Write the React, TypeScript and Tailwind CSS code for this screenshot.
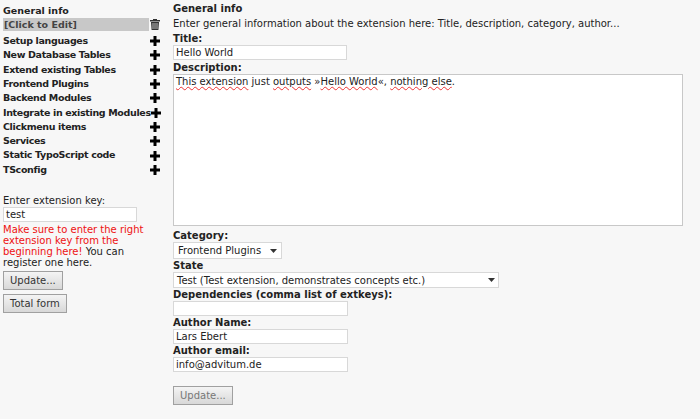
import React from "react";

const items = ["Setup languages","New Database Tables","Extend existing Tables","Frontend Plugins","Backend Modules","Integrate in existing Modules","Clickmenu items","Services","Static TypoScript code","TSconfig"];

const Plus = () => (
  <svg width="10" height="10" viewBox="0 0 10 10" className="shrink-0"><path d="M3.5 0h3v3.5H10v3H6.5V10h-3V6.5H0v-3h3.5z" fill="#000"/></svg>
);
const Trash = () => (
  <svg width="10" height="11" viewBox="0 0 10 11" className="shrink-0"><path d="M3 0h4v1h3v1.5H0V1h3z M1 3h8l-0.6 8H1.6z" fill="#333"/><path d="M3 4v6M5 4v6M7 4v6" stroke="#ddd" strokeWidth="0.8"/></svg>
);
const Caret = () => (
  <svg width="7" height="4" viewBox="0 0 7 4"><path d="M0 0h7L3.5 4z" fill="#333"/></svg>
);

const Label = ({ children }: { children: React.ReactNode }) => <div className="font-bold leading-[12px]">{children}</div>;
const Input = ({ v, w }: { v?: string; w: string }) => (
  <div className={`${w} h-[15px] bg-white border border-[#d8d8d8] px-[2px] leading-[13px]`}>{v}</div>
);
const Btn = ({ t, dim }: { t: string; dim?: boolean }) => (
  <div className={`inline-block border border-[#a0a0a0] bg-gradient-to-b from-[#f4f4f4] to-[#d8d8d8] px-[6px] h-[19px] leading-[17px] ${dim ? "text-[#777]" : "text-[#333]"}`}>{t}</div>
);

export default function App() {
  return (
    <div className="w-[700px] h-[419px] bg-[#f7f7f7] text-[10px] text-[#222] flex overflow-hidden" style={{ fontFamily: "Verdana, 'DejaVu Sans', sans-serif" }}>
      <div className="w-[170px] pl-[3px] pt-[4px] flex flex-col">
        <div className="font-bold leading-[13px] h-[13px] text-[9.5px]">General info</div>
        <div className="flex items-center w-[157px] h-[13px] mt-[1px]">
          <div className="flex-1 bg-[#c8c8c8] h-[13px] font-bold leading-[13px] text-[#444] pl-[1px] text-[9.5px]">[Click to Edit]</div>
          <div className="w-[11px] flex justify-end"><Trash /></div>
        </div>
        <div className="mt-[3px] flex flex-col w-[157px]">
          {items.map(i => (
            <div key={i} className="flex items-center justify-between h-[14.3px] font-bold text-[9.5px]">
              <span className="tracking-[-0.35px] whitespace-nowrap">{i}</span><Plus />
            </div>
          ))}
        </div>
        <div className="mt-[18px] leading-[12px]">Enter extension key:</div>
        <Input v="test" w="w-[134px]" />
        <div className="mt-[2px] leading-[11px] w-[145px]">
          <span className="text-[#ee1111]">Make sure to enter the right extension key from the beginning here!</span> You can register one here.
        </div>
        <div className="mt-[3px]"><Btn t="Update..." /></div>
        <div className="mt-[4px]"><Btn t="Total form" /></div>
      </div>
      <div className="flex-1 pl-[3px] pt-[2px] flex flex-col">
        <div className="font-bold leading-[13px]">General info</div>
        <div className="leading-[13px] mt-[2px] whitespace-nowrap">Enter general information about the extension here: Title, description, category, author...</div>
        <div className="mt-[3px]"><Label>Title:</Label></div>
        <Input v="Hello World" w="w-[174px]" />
        <div className="mt-[2px]"><Label>Description:</Label></div>
        <div className="w-[510px] h-[152px] bg-white border border-[#c8c8c8] px-[2px] leading-[13px]">
          <span className="underline decoration-wavy decoration-[#e33]">This extension</span> just <span className="underline decoration-wavy decoration-[#e33]">outputs</span> »<span className="underline decoration-wavy decoration-[#e33]">Hello World</span>«, <span className="underline decoration-wavy decoration-[#e33]">nothing else</span>.
        </div>
        <div className="mt-[4px]"><Label>Category:</Label></div>
        <div className="w-[109px] h-[17px] bg-white border border-[#d8d8d8] flex items-center justify-between px-[4px]">
          <span>Frontend Plugins</span><Caret />
        </div>
        <div className="mt-[1px]"><Label>State</Label></div>
        <div className="w-[326px] h-[16px] bg-white border border-[#d8d8d8] flex items-center justify-between px-[3px]">
          <span>Test (Test extension, demonstrates concepts etc.)</span><Caret />
        </div>
        <div className="mt-[1px]"><Label>Dependencies (comma list of extkeys):</Label></div>
        <Input w="w-[175px]" />
        <div className="mt-[1px]"><Label>Author Name:</Label></div>
        <Input v="Lars Ebert" w="w-[175px]" />
        <div className="mt-[1px]"><Label>Author email:</Label></div>
        <Input v="info@advitum.de" w="w-[175px]" />
        <div className="mt-[14px]"><Btn t="Update..." dim /></div>
      </div>
    </div>
  );
}
